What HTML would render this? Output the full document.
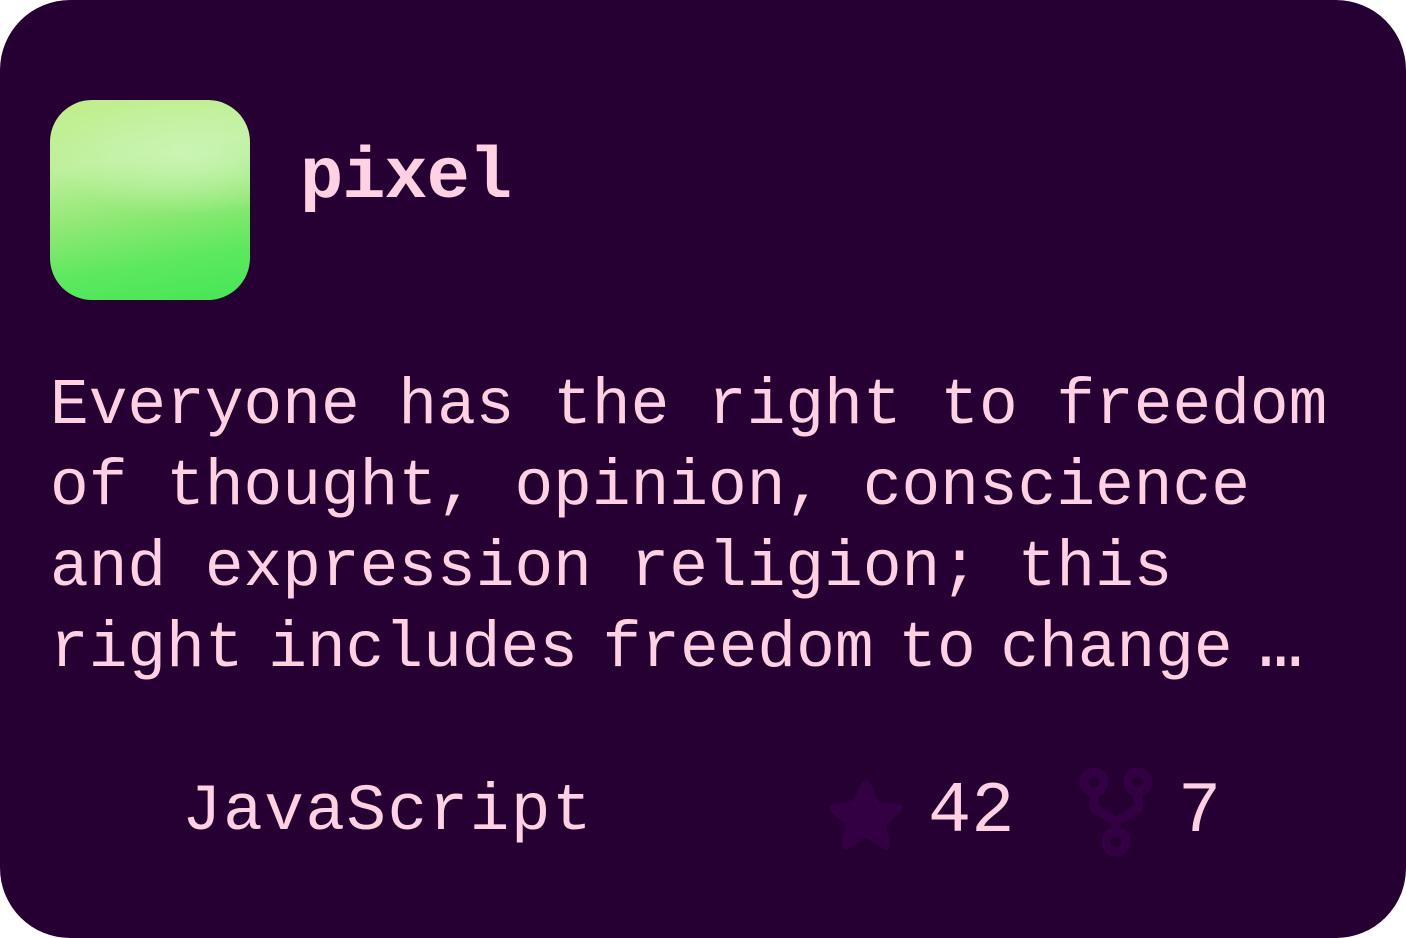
<!DOCTYPE html>
<html><head><style>
html,body{margin:0;padding:0;background:#fff;}
.card{position:absolute;left:0;top:0;width:1406px;height:938px;background:#260033;border-radius:70px;overflow:hidden;font-family:"Liberation Mono",monospace;color:#ffd1e3;}
.icon{position:absolute;left:50px;top:100px;width:200px;height:200px;border-radius:42px;
background:radial-gradient(ellipse 140px 60px at 140px 55px,rgba(205,245,185,.85),rgba(205,245,185,0)),linear-gradient(170deg,#c2ee8c 0%,#bff09c 30%,#90e875 55%,#5ce85e 78%,#46e656 100%);}
.title{position:absolute;left:300px;top:128px;font-size:72px;font-weight:bold;line-height:100px;letter-spacing:-1px;white-space:nowrap;}
.body{position:absolute;left:50px;top:366px;font-size:64.5px;line-height:81px;width:1360px;white-space:nowrap;}
.lang{position:absolute;left:182px;top:772px;font-size:66px;line-height:80px;letter-spacing:1.5px;}
.num{position:absolute;top:772px;font-size:72px;line-height:80px;}
</style></head><body>
<div class="card">
<div class="icon"></div>
<div class="title">pixel</div>
<div class="body">Everyone has the right to freedom<br>of thought, opinion, conscience<br>and expression religion; this<br><span style="word-spacing:-14px">right includes freedom to change</span><span style="margin-left:14px;letter-spacing:-24px">...</span></div>
<div class="lang">JavaScript</div>
<svg style="position:absolute;left:826px;top:776px" width="80" height="76" viewBox="0 0 80 76"><path d="M40 4 C43 4 44 6 46 10 L53 26 L71 28 C77 29 78 33 74 37 L60 49 L64 67 C65 73 61 75 57 72 L40 62 L23 72 C19 75 15 73 16 67 L20 49 L6 37 C2 33 3 29 9 28 L27 26 L34 10 C36 6 37 4 40 4Z" fill="#330044"/></svg>
<div class="num" style="left:928px">42</div>
<svg style="position:absolute;left:1078px;top:766px" width="76" height="94" viewBox="0 0 76 94"><g fill="none" stroke="#330044" stroke-width="9"><circle cx="16" cy="16" r="10"/><circle cx="60" cy="16" r="10"/><circle cx="38" cy="76" r="10"/><path d="M16 26 V42 L38 56 L60 42 V26 M38 56 V66"/></g></svg>
<div class="num" style="left:1178px">7</div>
</div>
</body></html>
